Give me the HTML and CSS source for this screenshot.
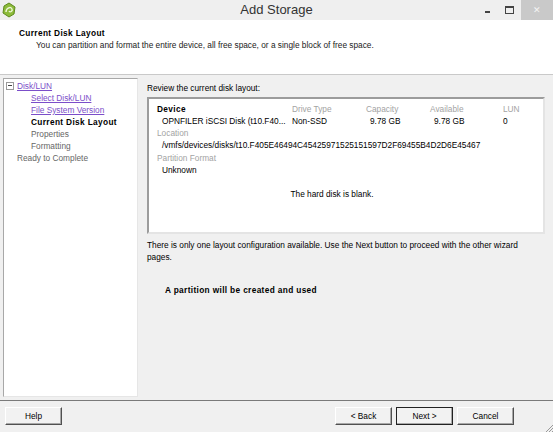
FILE: index.html
```html
<!DOCTYPE html>
<html lang="en">
<head>
    <meta charset="UTF-8">
    <title>Add Storage</title>
    <link rel="stylesheet" href="styles.css">
</head>
<body>
    <div class="window">

        <!-- Title bar -->
        <div class="titlebar">
            <svg class="app-icon" width="14" height="16" viewBox="0 0 14 16">
                <path d="M7 1 L13 5 L12 12 L7 15 L1 11 L2 4 Z" fill="#8dbb3a" stroke="#5e8a1e" stroke-width="1"/>
                <path d="M4 10 C4 6 9 4 10 7 C11 9 8 11 7 9" fill="none" stroke="#eef6d8" stroke-width="1.4"/>
            </svg>
            <span class="title">Add Storage</span>
            <div class="controls">
                <span class="ctl-min"></span>
                <span class="ctl-max"></span>
                <span class="ctl-close">&#x2715;</span>
            </div>
        </div>

        <!-- Header -->
        <div class="header">
            <div class="header-title">Current Disk Layout</div>
            <div class="header-sub">You can partition and format the entire device, all free space, or a single block of free space.</div>
        </div>

        <div class="main">
            <!-- Steps -->
            <div class="steps">
                <div class="step top"><span class="tree-box"></span><a>Disk/LUN</a></div>
                <div class="step sub"><a>Select Disk/LUN</a></div>
                <div class="step sub"><a>File System Version</a></div>
                <div class="step sub current">Current Disk Layout</div>
                <div class="step sub muted">Properties</div>
                <div class="step sub muted">Formatting</div>
                <div class="step top plain">Ready to Complete</div>
            </div>

            <!-- Content -->
            <div class="content">
                <div class="caption">Review the current disk layout:</div>
                <div class="disk-box">
                    <div class="disk-grid">
                        <div class="strong">Device</div>
                        <div class="label">Drive Type</div>
                        <div class="label">Capacity</div>
                        <div class="label">Available</div>
                        <div class="label">LUN</div>

                        <div class="indent">OPNFILER iSCSI Disk (t10.F40...</div>
                        <div>Non-SSD</div>
                        <div class="num">9.78 GB</div>
                        <div class="num">9.78 GB</div>
                        <div>0</div>
                    </div>
                    <div class="label">Location</div>
                    <div class="indent">/vmfs/devices/disks/t10.F405E46494C45425971525151597D2F69455B4D2D6E45467</div>
                    <div class="label gap">Partition Format</div>
                    <div class="indent">Unknown</div>
                    <div class="blank">The hard disk is blank.</div>
                </div>
                <div class="info">There is only one layout configuration available. Use the Next button to proceed with the other wizard pages.</div>
                <div class="result">A partition will be created and used</div>
            </div>
        </div>

        <!-- Footer -->
        <div class="footer">
            <button class="btn">Help</button>
            <div class="nav">
                <button class="btn">&lt; Back</button>
                <button class="btn default">Next &gt;</button>
                <button class="btn">Cancel</button>
            </div>
            <svg class="grip" width="8" height="8" viewBox="0 0 8 8">
                <path d="M8 1 L1 8 M8 4 L4 8 M8 7 L7 8" stroke="#9a9a9a" stroke-width="1"/>
            </svg>
        </div>

    </div>
</body>
</html>
```
FILE: styles.css
```css
/* General */
body {
    margin: 0;
    font-family: 'Liberation Sans', Arial, sans-serif;
    font-size: 8.3px;
    line-height: 12px;
    color: #000;
    background: #f0f0f0;
}

.window {
    width: 553px;
    height: 432px;
    display: flex;
    flex-direction: column;
    position: relative;
    overflow: hidden;
    background: #f0f0f0;
}

/* Title bar */
.titlebar {
    height: 20px;
    flex: none;
    display: flex;
    align-items: center;
    position: relative;
    background: #efefef;
}

.app-icon {
    margin-left: 2px;
}

.title {
    position: absolute;
    left: 0;
    right: 0;
    text-align: center;
    font-size: 13px;
    line-height: 20px;
    color: #333;
}

.controls {
    margin-left: auto;
    display: flex;
    align-items: center;
    height: 20px;
}

.ctl-min {
    width: 5px;
    height: 2px;
    background: #444;
    margin: 4px 15px 0 0;
}

.ctl-max {
    width: 7px;
    height: 5px;
    border: 1px solid #444;
    border-top-width: 2px;
    margin-right: 7px;
}

.ctl-close {
    width: 32px;
    height: 20px;
    background: #c9c9c9;
    color: #f4f4f4;
    font-size: 9px;
    line-height: 20px;
    text-align: center;
}

/* Header */
.header {
    height: 55px;
    flex: none;
    background: #fff;
    border-bottom: 1px solid #c9c9c9;
    padding: 7px 0 0 19px;
    box-sizing: border-box;
}

.header-title {
    font-weight: bold;
    letter-spacing: 0.35px;
}

.header-sub {
    padding-left: 17px;
    color: #222;
}

/* Main area */
.main {
    flex: 1;
    display: flex;
    border-bottom: 1px solid #7a7a7a;
}

.steps {
    width: 135px;
    margin: 3px 0 3px 3px;
    background: #fff;
    border: 1px solid #a8a8a8;
    border-right-color: #e6e6e6;
    border-bottom-color: #e6e6e6;
    padding-top: 1px;
    box-sizing: border-box;
}

.step {
    height: 12px;
    white-space: nowrap;
}

.step.top {
    padding-left: 13px;
    position: relative;
}

.step.sub {
    padding-left: 27px;
}

.step a {
    color: #7b4ec9;
    text-decoration: underline;
}

.step.current {
    font-weight: bold;
    letter-spacing: 0.35px;
}

.step.muted,
.step.plain {
    color: #666;
}

.tree-box {
    position: absolute;
    left: 2px;
    top: 2px;
    width: 6px;
    height: 6px;
    border: 1px solid #999;
}

.tree-box::after {
    content: "";
    position: absolute;
    left: 1px;
    top: 2px;
    width: 4px;
    height: 1px;
    background: #444;
}

.content {
    flex: 1;
    padding: 7px 8px 0 9px;
}

.caption {
    margin-bottom: 3px;
}

.disk-box {
    height: 137px;
    box-sizing: border-box;
    background: #fff;
    border: 2px solid #9c9c9c;
    border-right-color: #e4e4e4;
    border-bottom-color: #e4e4e4;
    padding: 4px 0 0 8px;
}

.disk-grid {
    display: grid;
    grid-template-columns: 135px 74px 64px 73px auto;
}

.strong {
    font-weight: bold;
    letter-spacing: 0.35px;
}

.label {
    color: #a3a3a3;
}

.indent {
    padding-left: 5px;
    white-space: nowrap;
}

.num {
    padding-left: 4px;
}

.gap {
    margin-top: 1px;
}

.blank {
    margin-top: 12px;
    padding-right: 36px;
    text-align: center;
}

.info {
    margin-top: 5px;
    max-width: 386px;
}

.result {
    margin-top: 21px;
    padding-left: 18px;
    font-weight: bold;
    letter-spacing: 0.35px;
}

/* Footer */
.footer {
    height: 31px;
    flex: none;
    display: flex;
    align-items: center;
    padding: 0 0 2px 5px;
    box-sizing: border-box;
}

.nav {
    margin-left: auto;
    margin-right: 39px;
    display: flex;
    gap: 4px;
}

.btn {
    width: 57px;
    height: 18px;
    padding: 0;
    font-family: 'Liberation Sans', Arial, sans-serif;
    font-size: 8.3px;
    background: #f2f2f2;
    border: 1px solid #fff;
    border-right-color: #505050;
    border-bottom-color: #505050;
    box-shadow: inset -1px -1px 0 #a8a8a8;
    color: #000;
}

.btn.default {
    border: 1px solid #222;
}

.grip {
    position: absolute;
    right: 0;
    bottom: 0;
}
```
